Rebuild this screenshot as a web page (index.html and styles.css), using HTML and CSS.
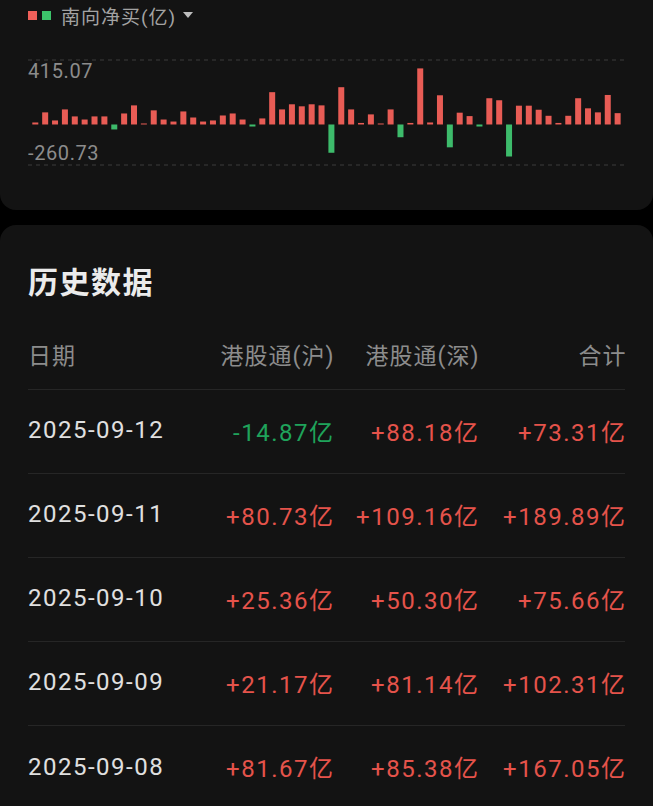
FILE: index.html
```html
<!DOCTYPE html>
<html lang="zh-CN">
<head>
  <meta charset="UTF-8">
  <meta name="viewport" content="width=device-width, initial-scale=1.0">
  <title>南向资金</title>
  <link rel="stylesheet" href="styles.css">
</head>
<body>
  <section class="card chart-card">
    <div class="legend">
      <span class="dot up"></span>
      <span class="dot down"></span>
      <span class="legend-label">南向净买(亿)</span>
      <span class="caret"></span>
    </div>
    <svg class="chart" id="chart" width="602" height="115" viewBox="0 0 602 115">
      <line class="grid-line" x1="0" y1="5" x2="600" y2="5"></line>
      <line class="grid-line" x1="0" y1="110" x2="600" y2="110"></line>
      <text class="axis-label" x="0" y="23">415.07</text>
      <text class="axis-label" x="0" y="105">-260.73</text>
      <g id="bars"></g>
    </svg>
  </section>

  <section class="card history-card">
    <h2 class="section-title">历史数据</h2>
    <div class="table">
      <div class="row head">
        <div class="cell date">日期</div>
        <div class="cell num">港股通(沪)</div>
        <div class="cell num">港股通(深)</div>
        <div class="cell num">合计</div>
      </div>
      <div class="row">
        <div class="cell date">2025-09-12</div>
        <div class="cell num fall">-14.87亿</div>
        <div class="cell num rise">+88.18亿</div>
        <div class="cell num rise">+73.31亿</div>
      </div>
      <div class="row">
        <div class="cell date">2025-09-11</div>
        <div class="cell num rise">+80.73亿</div>
        <div class="cell num rise">+109.16亿</div>
        <div class="cell num rise">+189.89亿</div>
      </div>
      <div class="row">
        <div class="cell date">2025-09-10</div>
        <div class="cell num rise">+25.36亿</div>
        <div class="cell num rise">+50.30亿</div>
        <div class="cell num rise">+75.66亿</div>
      </div>
      <div class="row">
        <div class="cell date">2025-09-09</div>
        <div class="cell num rise">+21.17亿</div>
        <div class="cell num rise">+81.14亿</div>
        <div class="cell num rise">+102.31亿</div>
      </div>
      <div class="row">
        <div class="cell date">2025-09-08</div>
        <div class="cell num rise">+81.67亿</div>
        <div class="cell num rise">+85.38亿</div>
        <div class="cell num rise">+167.05亿</div>
      </div>
    </div>
  </section>

  <script>
    // daily southbound net buy, 亿
    const flows = [
      13, 78, 26, 97, 52, 32, 52, 52, -32, 71,
      123, 6, 91, 32, 19, 84, 45, 19, 26, 58,
      71, 32, -13, 39, 208, 97, 130, 117, 130, 123,
      -182, 240, 97, 10, 65, 0, 97, -82, 10, 361,
      13, 188, -147, 76, 54, -13, 169, 156, -206, 121,
      121, 95, 56, 10, 56, 169, 104, 78, 190, 73
    ];

    function drawBars() {
      const axisMax = 415.07, axisMin = -260.73;
      const yTop = 5, yBottom = 110;
      const scale = (yBottom - yTop) / (axisMax - axisMin);
      const zero = yTop + axisMax * scale;
      const step = 9.87, barWidth = 6, offset = 4.3;

      const group = document.getElementById("bars");
      flows.forEach((v, i) => {
        const h = Math.max(Math.abs(v) * scale, 1);
        const rect = document.createElementNS("http://www.w3.org/2000/svg", "rect");
        rect.setAttribute("x", (offset + i * step).toFixed(2));
        rect.setAttribute("y", (v >= 0 ? zero - h : zero).toFixed(2));
        rect.setAttribute("width", barWidth);
        rect.setAttribute("height", h.toFixed(2));
        rect.setAttribute("class", v >= 0 ? "bar up" : "bar down");
        group.appendChild(rect);
      });
    }

    drawBars();
  </script>
</body>
</html>
```

FILE: styles.css
```css
html, body {
  overflow: hidden;
}
body {
  margin: 0;
  padding: 0;
  background-color: #000;
  color: #e6e6e6;
  font-family: Roboto, "Noto Sans CJK SC", sans-serif;
}
.card {
  background-color: #131313;
  padding: 0 28px;
}
.chart-card {
  height: 210px;
  box-sizing: border-box;
  padding-top: 5px;
  border-radius: 0 0 16px 16px;
}
.legend {
  display: flex;
  align-items: center;
  height: 20px;
}
.dot {
  width: 9px;
  height: 9px;
  margin-right: 5px;
}
.dot.up {
  background-color: #f0605a;
}
.dot.down {
  background-color: #3cc46a;
  margin-right: 10px;
}
.legend-label {
  font-size: 19px;
  letter-spacing: 1px;
  color: #a3a3a3;
}
.caret {
  width: 0;
  height: 0;
  margin-left: 7px;
  border-left: 5px solid transparent;
  border-right: 5px solid transparent;
  border-top: 6px solid #bdbdbd;
}
.chart {
  display: block;
  margin-top: 30px;
}
.grid-line {
  stroke: #3d3d3d;
  stroke-width: 1;
  stroke-dasharray: 4 4;
}
.axis-label {
  font-family: Roboto, sans-serif;
  font-size: 20px;
  letter-spacing: 0.6px;
  fill: #8c8c8c;
}
.bar.up {
  fill: #e85c55;
}
.bar.down {
  fill: #3dbb6b;
}

.history-card {
  margin-top: 15px;
  padding-top: 40px;
  border-radius: 16px 16px 0 0;
}
.section-title {
  margin: 0;
  font-size: 30px;
  line-height: 36px;
  font-weight: 700;
  letter-spacing: 1.5px;
  color: #ebebeb;
}
.table {
  margin-top: 21px;
}
.row {
  display: grid;
  grid-template-columns: 155px 150px 145px 1fr;
  align-items: center;
  height: 84px;
  box-sizing: border-box;
  padding-bottom: 3px;
  border-bottom: 1px solid #262626;
}
.row.head {
  height: 68px;
}
.row:last-child {
  border-bottom: none;
}
.cell {
  font-size: 24px;
  letter-spacing: 1.5px;
  white-space: nowrap;
}
.cell.num {
  text-align: right;
  margin-right: -1.5px;
}
.head .cell {
  font-size: 23px;
  letter-spacing: 1px;
  color: #8c8c8c;
}
.cell.date {
  color: #e0e0e0;
}
.head .cell.date {
  color: #8c8c8c;
}
.rise {
  color: #e5534b;
}
.fall {
  color: #1fa35b;
}
```
